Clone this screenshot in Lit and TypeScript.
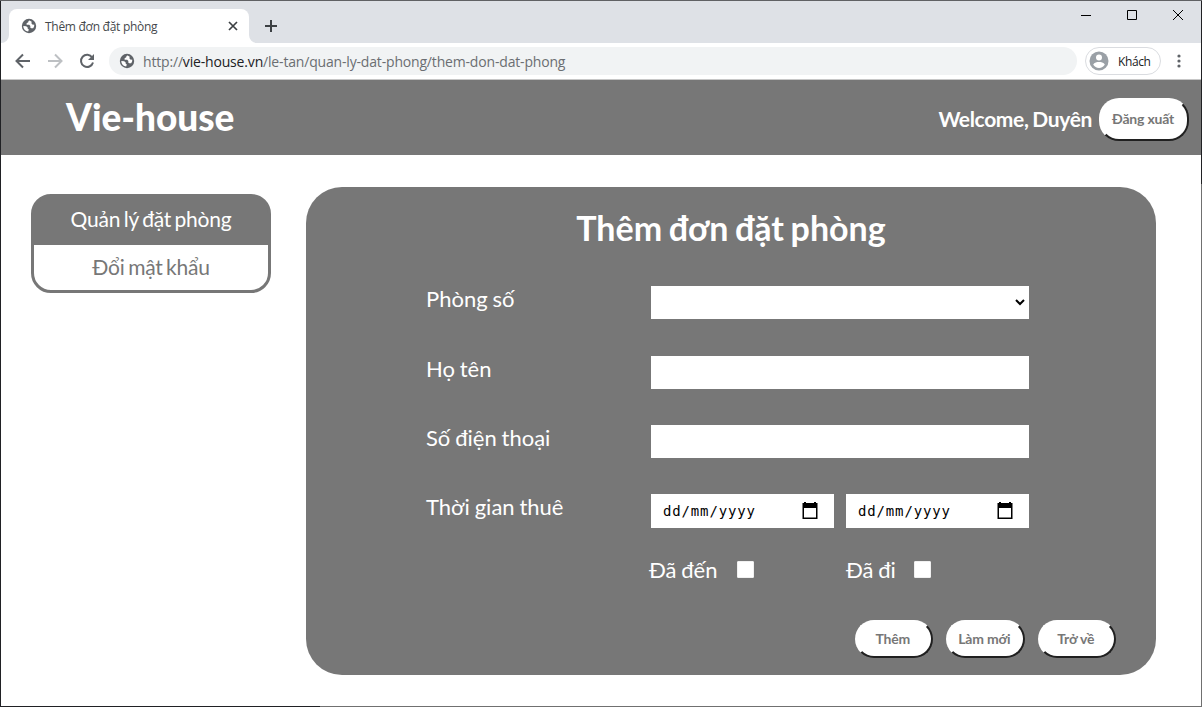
import { LitElement, html, css } from "lit";
import { customElement } from "lit/decorators.js";

const globe = html`<svg class="globe" width="16" height="16" viewBox="0 0 16 16">
  <circle cx="8" cy="8" r="7.2" fill="#5f6368"/>
  <path d="M8.6 2.4c-1 .2-1.5.9-1.3 1.900L5.600 5.200v1.600h2.600l1.200 1.300-.2 1.300 1.100.9 1.900-.1.9-1.800.2-1.700-2-.2-.9-1.200.3-1.600zM2.300 8.100l2.900.2 1.500 1.200-.1 1.100 1.200.8-.6 2.200c-2.600-.2-4.800-2.300-4.900-5.500z" fill="#fff"/>
</svg>`;

const calendar = html`<svg class="cal" width="16" height="18" viewBox="0 0 16 18">
  <path d="M2 0h2v1h8V0h2v1h1.500v16H.5V1H2z" fill="#000"/><rect x="2" y="6" width="12" height="9.500" fill="#fff"/>
</svg>`;

@customElement("app-root")
export class AppRoot extends LitElement {
  static styles = css`
    :host { display: block; width: 1202px; height: 707px; overflow: hidden; }
    * { box-sizing: border-box; }
    svg { display: block; flex: none; }
    span { white-space: nowrap; }
    .window { position: relative; width: 1202px; height: 707px; background: #fff; font-family: Lato, "Open Sans", sans-serif; overflow: hidden; }
    .edge { position: absolute; background: #202124; }
    .edge.l { left: 0; top: 0; width: 1px; height: 707px; }
    .edge.t { left: 0; top: 0; width: 1202px; height: 1px; background: #606164; }
    .edge.r { right: 0; top: 1px; width: 1px; height: 183px; }
    .edge.r2 { right: 0; top: 184px; width: 1px; height: 523px; background: #707070; }
    .edge.b { left: 0; bottom: 0; width: 320px; height: 1px; }
    .edge.b2 { left: 320px; bottom: 0; width: 882px; height: 1px; background: #707070; }
    .tabs { height: 43px; background: #dee1e6; display: flex; align-items: flex-start; font-family: "Open Sans", sans-serif; }
    .tab { margin: 9px 0 0 9px; width: 240px; height: 34px; background: #fff; border-radius: 8px 8px 0 0; display: flex; align-items: center; padding: 0 11px 0 12px; position: relative; }
    .foot { position: absolute; bottom: 0; }
    .foot.a { left: -8px; }
    .foot.z { right: -8px; }
    .tab-title { font-size: 12px; letter-spacing: -0.28px; color: #45484c; margin-left: 8px; flex: 1; }
    .plus { margin: 19px 0 0 15px; }
    .controls { margin-left: auto; margin-right: 18px; padding-top: 9px; display: flex; gap: 34px; }
    .toolbar { height: 36px; display: flex; align-items: center; padding-left: 15px; font-family: "Open Sans", sans-serif; }
    .nav { display: flex; gap: 16px; }
    .address { margin-left: 14px; width: 968px; height: 28px; border-radius: 14px; background: #f1f3f4; display: flex; align-items: center; padding-left: 10px; color: #6b6e72; font-size: 14px; letter-spacing: -0.175px; }
    .url { margin-left: 8px; }
    .url b { font-weight: 400; color: #202124; }
    .profile { margin-left: 8px; width: 76px; height: 28px; border: 1px solid #dadce0; border-radius: 14px; display: flex; align-items: center; padding-left: 3px; font-size: 12px; letter-spacing: -0.4px; color: #202124; }
    .profile span { margin-left: 9px; }
    .menu { margin-left: 16px; }
    .header { height: 76px; background: #777; border-top: 1px solid #c7c7c7; display: flex; align-items: center; padding: 3px 13px 0 66px; color: #fff; }
    .brand { font: 900 37px/1 Lato, sans-serif; flex: 1; padding-bottom: 6px; letter-spacing: -0.05px; }
    .welcome { font-size: 21px; font-weight: 700; margin-right: 7px; padding-bottom: 2px; letter-spacing: -0.35px; word-spacing: -1px; }
    .btn { font: 700 14px/1 Lato, sans-serif; letter-spacing: -0.2px; color: #777; background: #fff; border: 2px solid #fff; border-color: #fff #202020 #202020 #fff; display: flex; align-items: center; justify-content: center; white-space: nowrap; padding: 0 2px 0 0; }
    .logout { width: 90px; height: 43px; border-radius: 20px; }
    .content { display: flex; align-items: flex-start; padding: 32px 46px 0 31px; }
    .side { margin-top: 7px; width: 240px; height: 99px; border: 3px solid #777; border-radius: 20px; background: linear-gradient(#777 51px, #fff 51px) border-box; text-align: center; font-size: 21px; letter-spacing: -0.25px; word-spacing: -1.500px; color: #777; }
    .side-item { height: 42px; display: flex; align-items: center; justify-content: center; }
    .side-item.on { height: 48px; padding-bottom: 5px; color: #fff; }
    .card { margin-left: 35px; width: 850px; height: 488px; border-radius: 36px; background: #777; color: #fff; display: flex; flex-direction: column; }
    .title { font-size: 34px; line-height: 40px; font-weight: 700; text-align: center; margin-top: 21px; word-spacing: -1.700px; }
    .form { padding: 38px 0 0 120px; display: grid; grid-template-columns: 225px 378px; grid-template-rows: 70px 69px 69px 34px; align-items: start; font-size: 22px; line-height: 25px; }
    .form > span { word-spacing: -0.8px; }
    .field { height: 33px; background: #fff; display: flex; align-items: center; justify-content: flex-end; padding: 0 4px 1px 0; }
    .dates { display: grid; grid-template-columns: 183px 183px; column-gap: 12px; }
    .date { height: 34px; background: #fff; display: flex; align-items: center; justify-content: space-between; padding: 0 16px 0 12px; color: #000; font: 14px/1 "DejaVu Sans Mono", monospace; letter-spacing: 0.85px; }
    .checks { margin: 28px 0 0 343px; font-size: 22px; line-height: 28px; word-spacing: -1px; display: grid; grid-template-columns: 197px 183px; }
    .check { display: flex; align-items: center; gap: 20px; }
    .check + .check { gap: 18.500px; }
    .box { width: 17px; height: 17px; background: #fff; border: 1px solid #f0f0f0; border-radius: 1px; margin-top: -2px; }
    .actions { display: flex; justify-content: flex-end; gap: 13px; padding-right: 40px; margin-top: 36px; }
    .action { width: 78.500px; height: 38px; border-radius: 19px; padding-bottom: 1px; }
  `;

  render() {
    return html`<div class="window">
      <div class="tabs">
        <div class="tab">
          <svg class="foot a" width="8" height="8"><path d="M8 0v8H0A8 8 0 0 0 8 0" fill="#fff"/></svg>
          ${globe}<span class="tab-title">Thêm đơn đặt phòng</span>
          <svg width="10" height="10"><path d="M1 1l8 8M9 1l-8 8" stroke="#3c4043" stroke-width="1.700"/></svg>
          <svg class="foot z" width="8" height="8"><path d="M0 0v8h8A8 8 0 0 1 0 0" fill="#fff"/></svg>
        </div>
        <svg class="plus" width="14" height="14"><path d="M7 1v12M1 7h12" stroke="#3c4043" stroke-width="2"/></svg>
        <div class="controls">
          <svg width="12" height="12"><path d="M1 6.500h10" stroke="#000"/></svg>
          <svg width="12" height="12"><path d="M1.500 1.500h9v9h-9z" fill="none" stroke="#000"/></svg>
          <svg width="12" height="12"><path d="M1 1l10 10M11 1L1 11" stroke="#000"/></svg>
        </div>
      </div>
      <div class="toolbar">
        <div class="nav">
          <svg width="16" height="16"><path d="M15 8H2M8 1.500L1.500 8 8 14.500" fill="none" stroke="#5f6368" stroke-width="2"/></svg>
          <svg width="16" height="16"><path d="M1 8h13M8 1.500L14.500 8 8 14.500" fill="none" stroke="#bdc0c3" stroke-width="2"/></svg>
          <svg width="16" height="16"><path d="M13.200 4.500A6.100 6.100 0 1 0 14 9.500" fill="none" stroke="#5f6368" stroke-width="2"/><path d="M15 1v6H9z" fill="#5f6368"/></svg>
        </div>
        <div class="address">${globe}<span class="url">http://<b>vie-house.vn</b>/le-tan/quan-ly-dat-phong/them-don-dat-phong</span></div>
        <div class="profile">
          <svg width="20" height="20"><circle cx="10" cy="10" r="9.500" fill="#9aa0a6"/><circle cx="10" cy="6.500" r="3" fill="#fff"/><path d="M4.200 13.500c1-2 3.800-2.500 5.800-2.500s4.800.5 5.800 2.500A7.200 7.200 0 0 1 10 17a7.200 7.200 0 0 1-5.800-3.500" fill="#fff"/></svg>
          <span>Khách</span>
        </div>
        <svg class="menu" width="4" height="14"><g fill="#5f6368"><circle cx="2" cy="2" r="1.600"/><circle cx="2" cy="7" r="1.600"/><circle cx="2" cy="12" r="1.600"/></g></svg>
      </div>
      <div class="header">
        <span class="brand">Vie-house</span>
        <span class="welcome">Welcome, Duyên</span>
        <button class="btn logout">Đăng xuất</button>
      </div>
      <div class="content">
        <div class="side">
          <div class="side-item on"><span>Quản lý đặt phòng</span></div>
          <div class="side-item"><span>Đổi mật khẩu</span></div>
        </div>
        <div class="card">
          <div class="title"><span>Thêm đơn đặt phòng</span></div>
          <div class="form">
            <span>Phòng số</span>
            <div class="field"><svg width="10" height="8"><path d="M1 2l4 4 4-4" fill="none" stroke="#000" stroke-width="2"/></svg></div>
            <span>Họ tên</span><div class="field"></div>
            <span>Số điện thoại</span><div class="field"></div>
            <span>Thời gian thuê</span>
            <div class="dates">
              <div class="date"><span>dd/mm/yyyy</span>${calendar}</div>
              <div class="date"><span>dd/mm/yyyy</span>${calendar}</div>
            </div>
          </div>
          <div class="checks">
            <div class="check"><span>Đã đến</span><div class="box"></div></div>
            <div class="check"><span>Đã đi</span><div class="box"></div></div>
          </div>
          <div class="actions">
            <button class="btn action">Thêm</button>
            <button class="btn action">Làm mới</button>
            <button class="btn action">Trở về</button>
          </div>
        </div>
      </div>
      <div class="edge l"></div><div class="edge t"></div><div class="edge r"></div>
      <div class="edge r2"></div><div class="edge b"></div><div class="edge b2"></div>
    </div>`;
  }
}
